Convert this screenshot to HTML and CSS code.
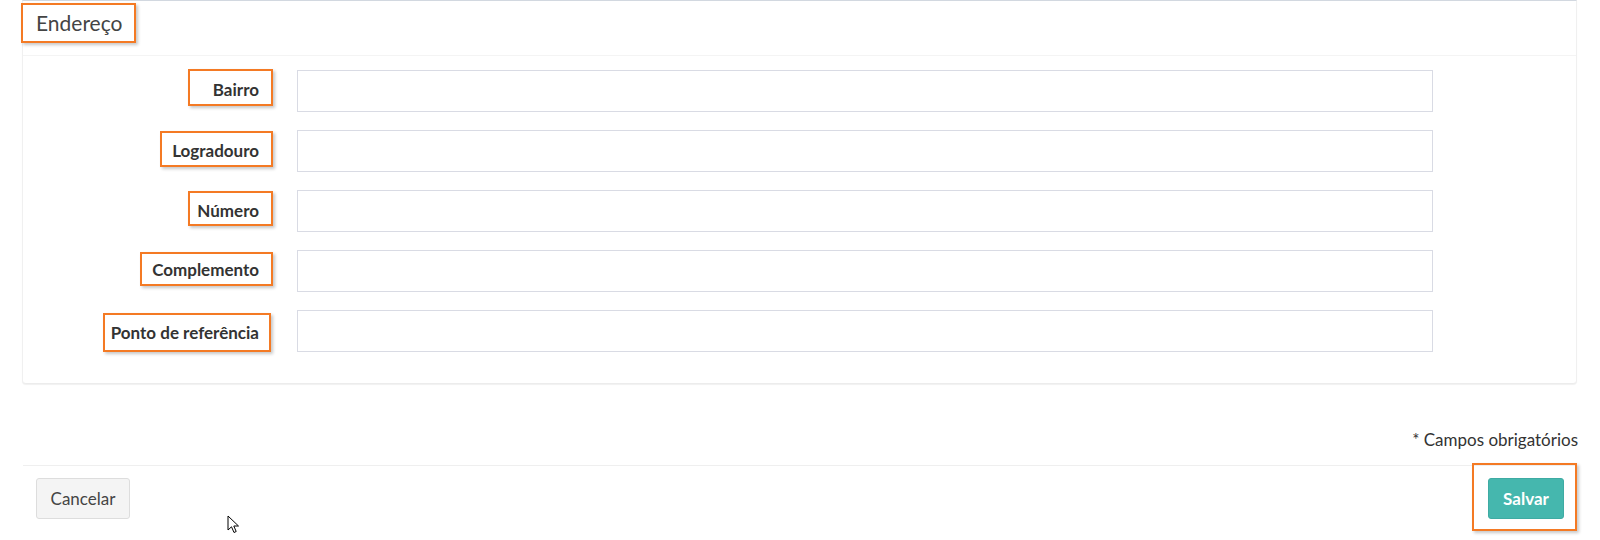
FILE: index.html
```html
<!DOCTYPE html>
<html lang="pt-BR">
<head>
  <meta charset="UTF-8">
  <meta name="viewport" content="width=device-width, initial-scale=1.0">
  <title>Endereço</title>
  <link rel="stylesheet" href="styles.css">
</head>
<body>
  <div class="page">
    <div class="box">
      <div class="box-header">
        <h3 class="box-title hl">Endereço</h3>
      </div>

      <form class="box-body">
        <div class="form-row">
          <label for="bairro"><span class="hl hl-label hl-bairro">Bairro</span></label>
          <input type="text" id="bairro" autocomplete="off">
        </div>
        <div class="form-row">
          <label for="logradouro"><span class="hl hl-label hl-logradouro">Logradouro</span></label>
          <input type="text" id="logradouro" autocomplete="off">
        </div>
        <div class="form-row">
          <label for="numero"><span class="hl hl-label hl-numero">Número</span></label>
          <input type="text" id="numero" autocomplete="off">
        </div>
        <div class="form-row">
          <label for="complemento"><span class="hl hl-label hl-complemento">Complemento</span></label>
          <input type="text" id="complemento" autocomplete="off">
        </div>
        <div class="form-row">
          <label for="referencia"><span class="hl hl-label hl-referencia">Ponto de referência</span></label>
          <input type="text" id="referencia" autocomplete="off">
        </div>
      </form>
    </div>

    <p class="note">* Campos obrigatórios</p>

    <div class="footer">
      <button type="button" class="btn btn-default">Cancelar</button>
      <span class="hl hl-save"><button type="button" class="btn btn-save">Salvar</button></span>
    </div>
  </div>

  <svg class="cursor" width="13" height="19" viewBox="0 0 13 19">
    <path d="M1 1 L1 15 L4.5 11.8 L7 17.5 L9.2 16.5 L6.8 11 L11.5 11 Z" fill="#fff" stroke="#000" stroke-width="1" stroke-linejoin="round"/>
  </svg>
</body>
</html>
```

FILE: styles.css
```css
body {
  font-family: Lato, 'Liberation Sans', sans-serif;
  background-color: #ffffff;
  margin: 0;
  padding: 0;
  color: #333;
}

.page {
  padding: 0 23px 30px 22px;
}

/* highlight boxes drawn over the screenshot */
.hl {
  box-sizing: border-box;
  display: inline-block;
  border: 2px solid #f47a24;
  box-shadow: 2px 2px 3px rgba(0,0,0,0.22);
}

.box {
  background-color: #fff;
  border-top: 1px solid #d2d8e0;
  border-left: 1px solid #f0f0f0;
  border-right: 1px solid #f0f0f0;
  border-bottom: 1px solid #ececec;
  border-radius: 0 0 4px 4px;
  box-shadow: 0 1px 1px rgba(0,0,0,0.06);
}

.box-header {
  height: 55px;
  padding-top: 2px;
  box-sizing: border-box;
  border-bottom: 1px solid #f4f4f4;
}

.box-title {
  margin: 0 0 0 -2px;
  width: 115px;
  height: 40px;
  padding-left: 13px;
  font-size: 21px;
  font-weight: normal;
  line-height: 36px;
  color: #444;
}

.box-body {
  padding: 14px 0 31px 0;
  display: flex;
  flex-direction: column;
  gap: 18px;
}

.form-row {
  display: grid;
  grid-template-columns: 250px 1136px;
  column-gap: 24px;
}

.form-row label {
  display: flex;
  justify-content: flex-end;
  align-items: flex-start;
}

.hl-label {
  height: 37px;
  padding: 8px 12px 0 0;
  text-align: right;
  font-size: 17px;
  font-weight: bold;
  line-height: 20px;
  color: #333;
}

.hl-bairro { width: 85px; margin-top: -1px; padding-top: 9px; }
.hl-logradouro { width: 113px; margin-top: 1px; height: 36px; }
.hl-numero { width: 85px; margin-top: 1px; height: 35px; }
.hl-complemento { width: 133px; margin-top: 2px; height: 34px; padding-top: 6px; }
.hl-referencia { width: 168px; margin: 3px 2px 0 0; height: 39px; padding-right: 10px; }

.form-row input {
  box-sizing: border-box;
  height: 42px;
  border: 1px solid #d9dbe4;
  border-radius: 0;
  padding: 6px 12px;
  font-family: inherit;
  font-size: 16px;
  outline: none;
}

.note {
  margin: 45px -1px 0 0;
  height: 22px;
  line-height: 22px;
  text-align: right;
  font-size: 17px;
  color: #333;
}

.footer {
  margin: 14px 1px 0 1px;
  border-top: 1px solid #efefef;
  padding: 12px 12px 0 13px;
  display: flex;
  justify-content: space-between;
  align-items: flex-start;
}

.btn {
  box-sizing: border-box;
  height: 41px;
  border-radius: 3px;
  font-family: inherit;
  font-size: 17px;
  cursor: pointer;
}

.btn-default {
  width: 94px;
  background-color: #f4f4f4;
  border: 1px solid #dddddd;
  color: #444;
}

.btn-save {
  display: block;
  width: 76px;
  background-color: #45b7ae;
  border: 1px solid #3eaba3;
  color: #fff;
  font-weight: bold;
}

.hl-save {
  height: 68px;
  margin: -15px -13px -12px -16px;
  padding: 13px 11px 10px 14px;
}

.cursor {
  position: absolute;
  left: 227px;
  top: 515px;
}
```
